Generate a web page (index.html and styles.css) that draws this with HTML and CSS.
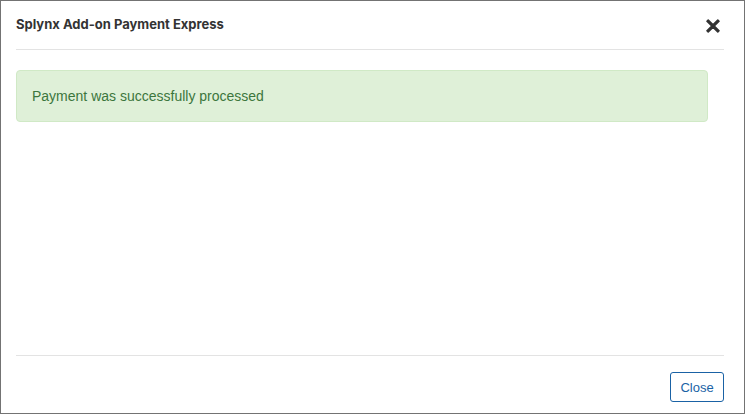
FILE: index.html
```html
<!DOCTYPE html>
<html>
<head>
<meta charset="utf-8">
<link rel="stylesheet" href="styles.css">
</head>
<body>
<div class="modal">
  <div class="modal-header">
    <h4 class="modal-title">Splynx Add-on Payment Express</h4>
    <button class="btn-x" aria-label="Close">
      <svg width="14" height="14" viewBox="0 0 14 14"><path d="M2.2 1 L7 5.8 L11.8 1 L13 2.2 L8.2 7 L13 11.8 L11.8 13 L7 8.2 L2.2 13 L1 11.8 L5.8 7 L1 2.2 Z" fill="#333" stroke="#333" stroke-width="1.6" stroke-linejoin="round"/></svg>
    </button>
  </div>
  <div class="modal-body">
    <div class="alert">Payment was successfully processed</div>
  </div>
  <div class="modal-footer">
    <button class="btn-close">Close</button>
  </div>
</div>
</body>
</html>
```
FILE: styles.css
```css
* { box-sizing: border-box; }
html, body { margin: 0; padding: 0; }
body { width: 745px; height: 414px; background: #fff; }
.modal {
  width: 745px;
  height: 414px;
  border: 1px solid #737373;
  display: flex;
  flex-direction: column;
  background: #fff;
}
.modal-header {
  height: 49px;
  margin: 0 20px 0 15px;
  border-bottom: 1px solid #e3e3e3;
  display: flex;
  align-items: center;
  justify-content: space-between;
  padding-bottom: 2px;
}
.modal-title {
  margin: 0;
  font-family: Inter, "Liberation Sans", sans-serif;
  font-weight: 700;
  font-size: 13px;
  color: #333;
}
.btn-x {
  border: 0;
  background: none;
  padding: 0;
  margin: 3px 4px 0 0;
  width: 14px;
  height: 14px;
  display: flex;
}
.modal-body {
  flex: 1;
  padding: 20px 36px 0 15px;
}
.alert {
  height: 52px;
  background: #dff0d8;
  border: 1px solid #d0e9c6;
  border-radius: 4px;
  color: #3c763d;
  font-family: "Liberation Sans", Arial, sans-serif;
  font-size: 14px;
  padding: 0 15px;
  display: flex;
  align-items: center;
}
.modal-footer {
  margin: 0 20px 0 15px;
  border-top: 1px solid #e3e3e3;
  padding: 16px 0 11px;
  display: flex;
  justify-content: flex-end;
}
.btn-close {
  width: 54px;
  height: 30px;
  border: 1px solid #1a62a5;
  border-radius: 3px;
  background: #fff;
  color: #1a62a5;
  font-family: "Liberation Sans", Arial, sans-serif;
  font-size: 13px;
  padding: 0;
}
```
